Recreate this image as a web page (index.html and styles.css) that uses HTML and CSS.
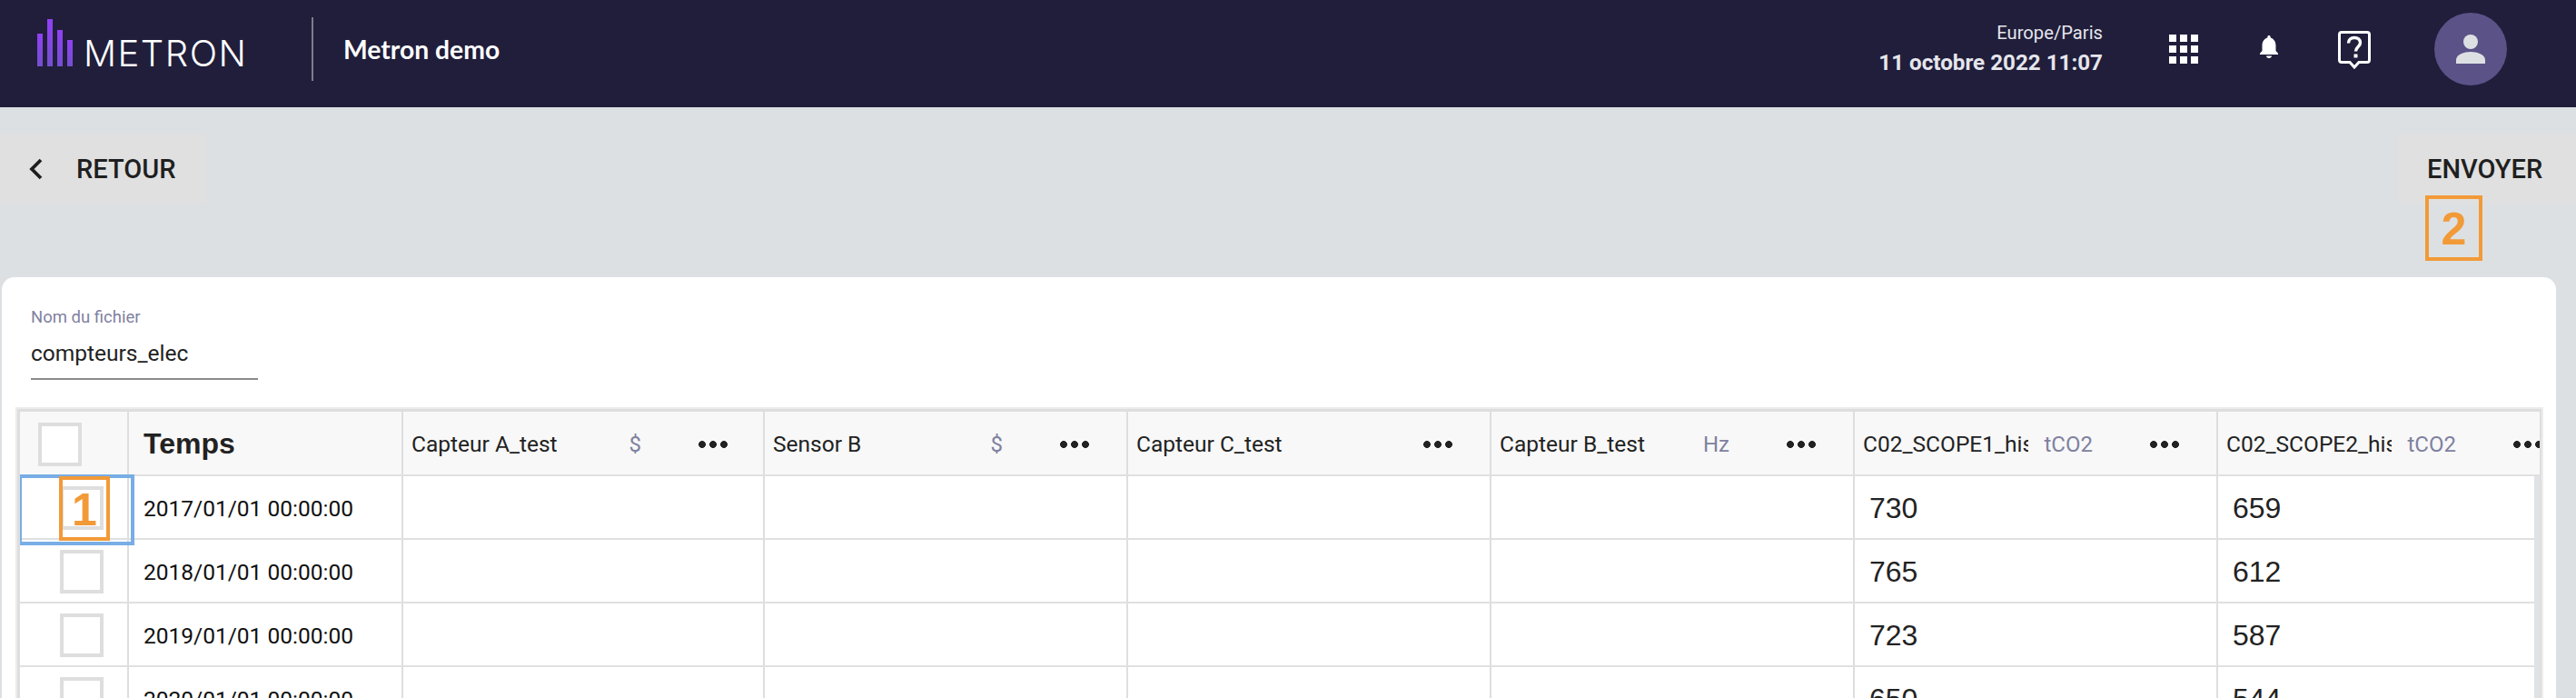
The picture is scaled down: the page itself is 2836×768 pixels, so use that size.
FILE: index.html
```html
<!DOCTYPE html>
<html lang="fr">
<head>
<meta charset="utf-8">
<title>Metron demo</title>
<link rel="stylesheet" href="styles.css">
</head>
<body>
<header class="topbar">
  <div class="brand">
    <div class="logo">
      <div class="bars"><i class="bar b1"></i><i class="bar b2"></i><i class="bar b3"></i><i class="bar b4"></i></div>
      <span class="wordmark">METRON</span>
    </div>
    <div class="divider"></div>
    <div class="site">Metron demo</div>
  </div>
  <div class="tools">
    <div class="clock">
      <div class="tz">Europe/Paris</div>
      <div class="now">11 octobre 2022 11:07</div>
    </div>
    <svg class="ico-grid" width="32" height="32" viewBox="0 0 32 32" fill="#fff"><path d="M0 0h8v8H0zM12 0h8v8h-8zM24 0h8v8h-8zM0 12h8v8H0zM12 12h8v8h-8zM24 12h8v8h-8zM0 24h8v8H0zM12 24h8v8h-8zM24 24h8v8h-8z"/></svg>
    <svg class="ico-bell" width="20" height="26" viewBox="0 0 20 26" fill="#fff"><path d="M10 0c1 0 1.600.7 1.700 1.700v.8C15.500 3.700 17.500 7 17.500 11v6L20 19.800V21H0v-1.200L2.500 17v-6c0-4 2-7.300 5.800-8.500v-.8C8.400.7 9 0 10 0zM7 22.500h6c0 1.500-1.300 2.500-3 2.500s-3-1-3-2.500z"/></svg>
    <svg class="ico-help" width="36" height="42" viewBox="0 0 36 42"><path d="M4 1.500h28c1.400 0 2.500 1.100 2.500 2.500v28c0 1.400-1.100 2.500-2.500 2.500h-9L18 40l-5-5.500H4c-1.400 0-2.500-1.100-2.500-2.500V4c0-1.400 1.100-2.500 2.500-2.500z" fill="none" stroke="#fff" stroke-width="3"/><path d="M11.500 13.500c0-3.800 2.700-6 6.500-6s6.500 2 6.500 5.500c0 4.600-5 4.500-5 9.500" fill="none" stroke="#fff" stroke-width="3.400"/><path d="M17.500 25.500h4v4h-4z" fill="#fff"/></svg>
    <div class="avatar">
      <svg width="34" height="32" viewBox="0 0 34 32" fill="#dde0e3"><ellipse cx="17" cy="8" rx="8" ry="8"/><path d="M1 32v-4c0-6 9-9 16-9s16 3 16 9v4z"/></svg>
    </div>
  </div>
</header>

<main class="page">
  <div class="actions">
    <button class="btn btn-back">
      <svg width="15" height="24" viewBox="0 0 15 24"><path d="M13 2 3 12l10 10" fill="none" stroke="#1f1f1f" stroke-width="3.800"/></svg>
      <span>RETOUR</span>
    </button>
    <button class="btn btn-send"><span>ENVOYER</span></button>
    <div class="marker marker-two">2</div>
  </div>

  <section class="card">
    <div class="field">
      <div class="field-label">Nom du fichier</div>
      <div class="field-value">compteurs_elec</div>
    </div>

    <div class="table">
      <div class="row head">
        <div class="cell check"><span class="box box-head"></span></div>
        <div class="cell time-head">Temps</div>
        <div class="cell col"><span class="name">Capteur A_test</span><span class="unit">$</span><span class="dots"></span></div>
        <div class="cell col"><span class="name">Sensor B</span><span class="unit">$</span><span class="dots"></span></div>
        <div class="cell col"><span class="name">Capteur C_test</span><span class="unit"></span><span class="dots"></span></div>
        <div class="cell col"><span class="name">Capteur B_test</span><span class="unit">Hz</span><span class="dots"></span></div>
        <div class="cell col"><span class="name">C02_SCOPE1_his</span><span class="unit">tCO2</span><span class="dots"></span></div>
        <div class="cell col"><span class="name">C02_SCOPE2_his</span><span class="unit">tCO2</span><span class="dots"></span></div>
      </div>

      <div class="rows">
        <div class="row">
          <div class="cell check"><span class="box"></span><div class="selection"></div><div class="marker marker-one">1</div></div>
          <div class="cell time">2017/01/01 00:00:00</div>
          <div class="cell"></div><div class="cell"></div><div class="cell"></div><div class="cell"></div>
          <div class="cell num">730</div><div class="cell num">659</div>
        </div>
        <div class="row">
          <div class="cell check"><span class="box"></span></div>
          <div class="cell time">2018/01/01 00:00:00</div>
          <div class="cell"></div><div class="cell"></div><div class="cell"></div><div class="cell"></div>
          <div class="cell num">765</div><div class="cell num">612</div>
        </div>
        <div class="row">
          <div class="cell check"><span class="box"></span></div>
          <div class="cell time">2019/01/01 00:00:00</div>
          <div class="cell"></div><div class="cell"></div><div class="cell"></div><div class="cell"></div>
          <div class="cell num">723</div><div class="cell num">587</div>
        </div>
        <div class="row">
          <div class="cell check"><span class="box"></span></div>
          <div class="cell time">2020/01/01 00:00:00</div>
          <div class="cell"></div><div class="cell"></div><div class="cell"></div><div class="cell"></div>
          <div class="cell num">650</div><div class="cell num">544</div>
        </div>
      </div>
    </div>
  </section>
</main>
</body>
</html>
```

FILE: styles.css
```css
* { box-sizing: border-box; }
html, body { margin: 0; height: 768px; overflow: hidden; }
body { background: #dde0e3; font-family: Roboto, "Liberation Sans", sans-serif; color: #222; }

.topbar { height: 118px; background: #201e3b; display: flex; justify-content: space-between; align-items: flex-start; color: #fff; }
.brand { display: flex; align-items: flex-start; padding: 19px 0 0 41px; }
.logo { display: flex; align-items: flex-end; width: 302px; height: 59px; }
.bars { display: flex; align-items: flex-end; gap: 5px; height: 52px; margin-bottom: 5px; }
.bar { display: block; width: 6px; background: linear-gradient(#9140f5, #7350cc); }
.b1 { height: 36px; }
.b2 { height: 52px; }
.b3 { height: 40px; }
.b4 { height: 29px; }
.wordmark { margin-left: 12px; font-family: Inter, sans-serif; font-weight: 300; font-size: 40px; line-height: 34px; height: 36px; letter-spacing: 1.500px; color: #fff; }
.divider { width: 2px; height: 70px; background: #7d7d85; }
.site { margin: 17px 0 0 33px; font-family: Lato, sans-serif; font-weight: 700; font-size: 28.300px; line-height: 36px; }

.tools { display: flex; align-items: flex-start; padding-right: 76px; }
.clock { margin: 24px 73px 0 0; text-align: right; }
.tz { font-size: 20.200px; line-height: 24px; color: #e6e6ec; }
.now { margin-top: 7px; font-size: 24.200px; line-height: 28px; font-weight: 700; color: #e6e6ec; }
.ico-grid { margin: 38px 68px 0 0; }
.ico-bell { margin: 39px 66px 0 0; }
.ico-help { margin: 34px 70px 0 0; }
.avatar { width: 80px; height: 80px; margin-top: 14px; border-radius: 50%; background: #5b5288; display: flex; align-items: center; justify-content: center; }

.page { position: relative; }
.actions { display: flex; justify-content: space-between; padding-top: 30px; height: 187px; position: relative; }
.btn { display: flex; align-items: center; height: 75px; border: 0; background: #e0e0e0; color: #1f1f1f; font: 500 29px Roboto, sans-serif; padding: 0; }
.btn-back { width: 226px; padding-left: 32px; gap: 37px; }
.btn-send { width: 196px; padding-left: 32px; }

.marker { position: absolute; border: 4px solid #f29a38; color: #f29a38; font-family: "Liberation Sans", sans-serif; font-weight: 700; display: flex; align-items: center; justify-content: center; }
.marker-two { left: 2670px; top: 97px; width: 63px; height: 72px; padding-top: 2px; font-size: 50px; }

.card { margin: 0 22px 0 2px; height: 480px; background: #fff; border-radius: 14px 14px 0 0; padding: 34px 0 0 17px; }
.field { padding-left: 15px; width: 265px; }
.field-label { font-size: 18.500px; line-height: 20px; color: #7f81a0; }
.field-value { margin-top: 14px; padding-bottom: 11px; font-size: 24.500px; line-height: 32px; color: #222; border-bottom: 2px solid #8a8a8a; }

.table { margin: 32px 16px 0 0; height: 340px; border: solid #dedede; border-width: 3px 2px 0 3px; outline: 2px solid #ececec; overflow: hidden; }
.row { display: grid; grid-template-columns: 120px 302px 398px 400px 400px 400px 400px 400px; height: 70px; border-bottom: 2px solid #e0e0e0; }
.head { height: 71px; background: #f8f8f8; }
.rows { background: #fff; position: relative; }
.rows::after { content: ""; position: absolute; top: 0; right: 0; bottom: 0; width: 6px; background: #dfe3e6; z-index: 3; }
.cell { position: relative; display: flex; align-items: center; min-width: 0; border-right: 2px solid #dedede; }
.check { justify-content: flex-start; }
.box { display: block; width: 48px; height: 48px; margin: 2px 0 0 44px; border: 4px solid #dedede; background: #fff; }
.box-head { margin-left: 20px; }
.selection { position: absolute; left: -2px; top: -2px; width: 128px; height: 78px; border: 4px solid #78ade6; z-index: 4; }
.marker-one { left: 43px; top: 0; width: 56px; height: 71px; padding-top: 3px; font-size: 50px; z-index: 5; }
.time-head { padding: 2px 0 0 16px; font-family: "Liberation Sans", sans-serif; font-weight: 700; font-size: 32px; color: #222; }
.time { padding: 2px 0 0 16px; font-size: 24.500px; color: #111; }
.num { padding: 2px 0 0 16px; font-family: "Liberation Sans", sans-serif; font-size: 32px; color: #222; }
.col { padding: 2px 0 0 9px; font-size: 24.500px; color: #222; }
.name { width: 182px; flex: none; overflow: hidden; white-space: nowrap; }
.unit { width: 71px; flex: none; font-size: 24px; text-align: right; color: #7f81a0; }
.dots { flex: none; width: 32px; height: 8px; margin-left: 63px; background: radial-gradient(circle, #222 3.600px, transparent 4.200px) -2px 0 / 12px 8px repeat-x; }
```
